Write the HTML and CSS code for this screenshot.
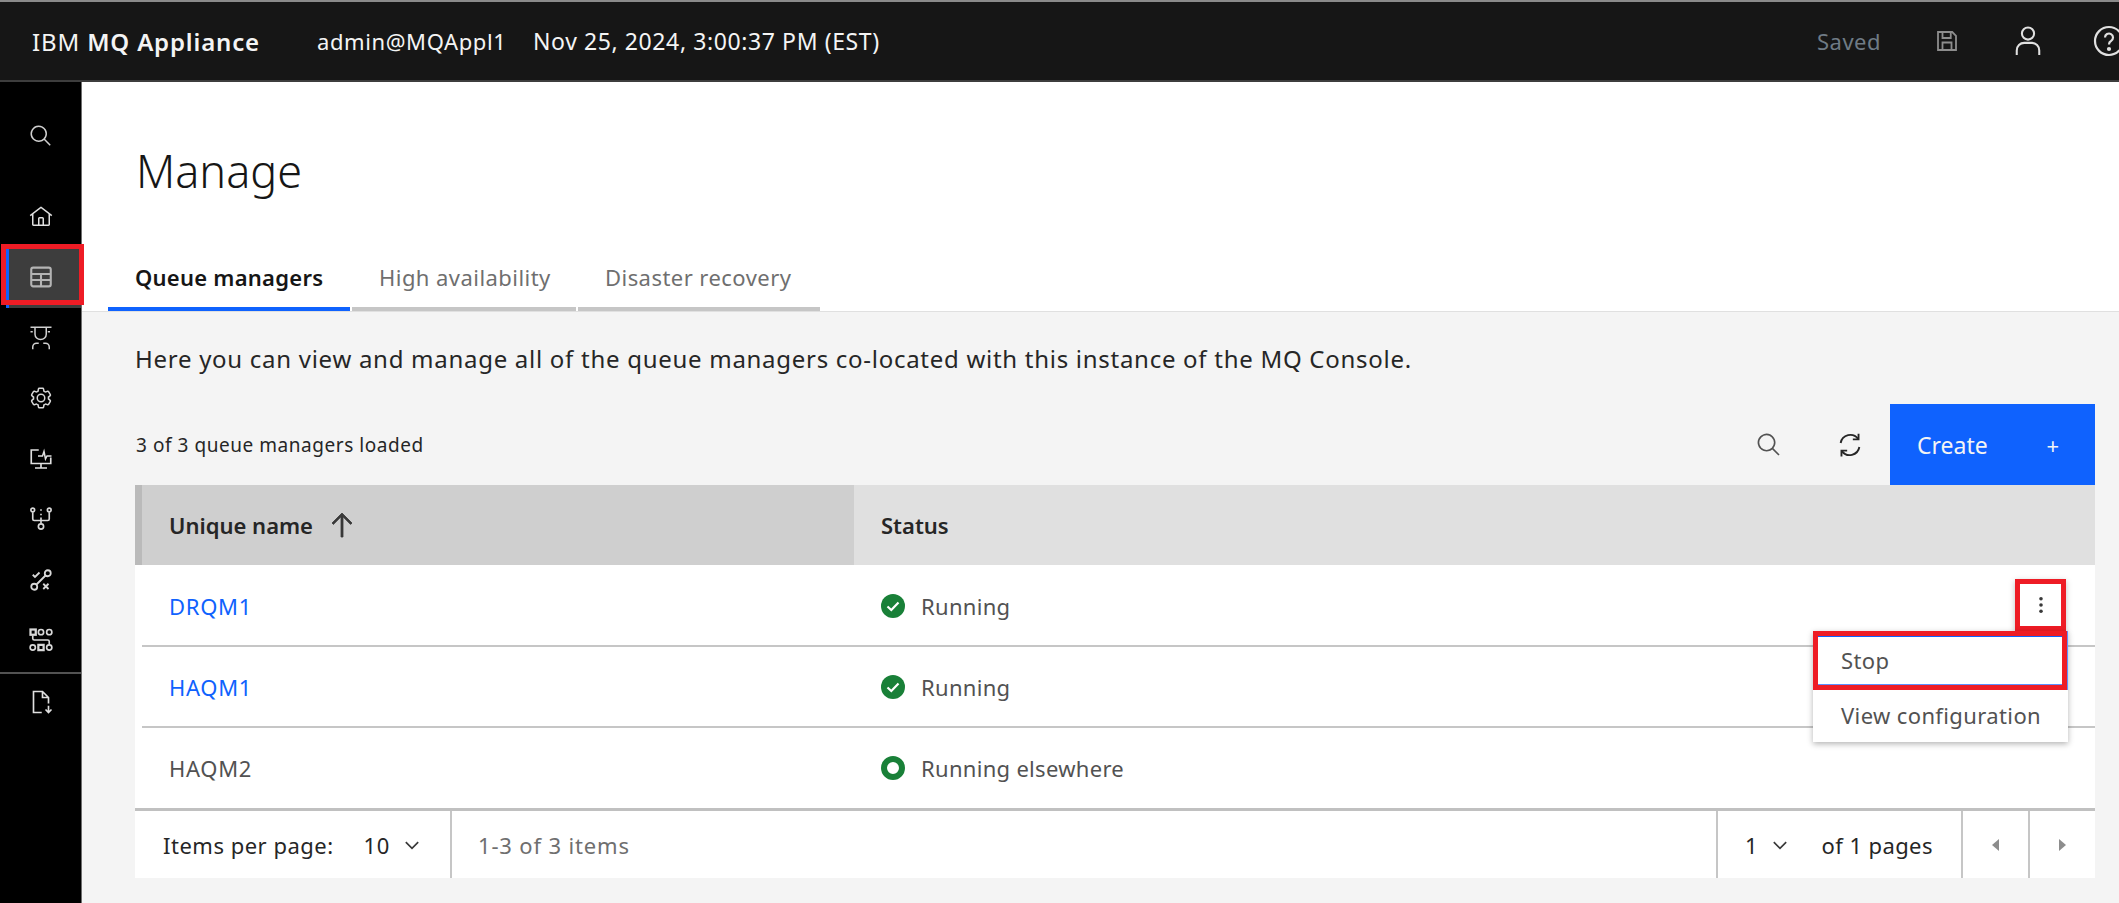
FILE: index.html
```html
<!DOCTYPE html>
<html lang="en">
<head>
<meta charset="utf-8">
<title>Manage - IBM MQ Appliance</title>
<link rel="stylesheet" href="styles.css">
</head>
<body>
<div class="app">
  <header class="topbar">
    <div class="brand">IBM <b>MQ Appliance</b></div>
    <div class="user">admin@MQAppl1</div>
    <div class="clock">Nov 25, 2024, 3:00:37 PM (EST)</div>
    <div class="top-right">
      <span class="saved">Saved</span>
      <svg class="ico-save" viewBox="0 0 32 32" fill="none" stroke="#8d8d8d" stroke-width="2.4"><path d="M4 4h19l5 5v19H4z"/><path d="M10 4v8h11V4M10 28V18h12v10"/></svg>
      <svg class="ico-user" viewBox="0 0 32 32" fill="none" stroke="#e0e0e0" stroke-width="2.2"><circle cx="16" cy="8" r="6.5"/><path d="M4 31v-5a8 8 0 0 1 8-8h8a8 8 0 0 1 8 8v5"/></svg>
      <div class="help-clip"><svg class="ico-help" viewBox="0 0 32 32" fill="none" stroke="#e0e0e0" stroke-width="2.2"><circle cx="16" cy="16" r="14"/><path d="M12 12.5a4 4 0 1 1 6 3.5c-1.500.8-2 1.800-2 3.500"/><circle cx="16" cy="24" r="1" fill="#e0e0e0"/></svg></div>
    </div>
  </header>
  <div class="body-row">
    <nav class="sidebar">
      <div class="nav-item nav-search"><svg viewBox="0 0 32 32" fill="#d0d0d0"><path d="M29 27.5859l-7.5521-7.5521a11.0177 11.0177 0 1 0-1.4141 1.4141L27.5859 29ZM4 13a9 9 0 1 1 9 9 9.01 9.01 0 0 1-9-9Z"/></svg></div>
      <div class="nav-item"><svg viewBox="0 0 32 32" fill="#e0e0e0"><path d="M16.6123,2.2138a1.01,1.01,0,0,0-1.2427,0L1,13.4194l1.2427,1.5717L4,13.6209V26a2.0041,2.0041,0,0,0,2,2H26a2.0037,2.0037,0,0,0,2-2V13.63L29.7573,15,31,13.4282ZM18,26H14V18h4Zm2,0V18a2.0023,2.0023,0,0,0-2-2H14a2.002,2.002,0,0,0-2,2v8H6V12.0615l10-7.79,10,7.8005V26Z"/></svg></div>
      <div class="nav-item selected"><svg viewBox="0 0 32 32" fill="none" stroke="#b4b4b4" stroke-width="2.8"><rect x="3" y="3.500" width="26" height="25" rx="2.500"/><path d="M3 12h26M3 20h26M16 12v16"/></svg></div>
      <div class="nav-item"><svg viewBox="0 0 32 32" fill="none" stroke="#d0d0d0" stroke-width="2"><path d="M2 1.500h28M2 7.500h3M25 7.500h3M8 2v9a7.500 7 0 0 0 15 0V2"/><path d="M5 31v-3a5 5 0 0 1 5-5h3M27 31v-3a5 5 0 0 0-5-5h-3"/></svg></div>
      <div class="nav-item"><svg viewBox="0 0 32 32" fill="#d8d8d8"><path d="M27,16.76c0-.25,0-.5,0-.76s0-.51,0-.77l1.92-1.68A2,2,0,0,0,29.3,11L26.94,7a2,2,0,0,0-1.73-1,2,2,0,0,0-.64.1l-2.43.82a11.35,11.35,0,0,0-1.31-.75l-.51-2.52a2,2,0,0,0-2-1.61H13.64a2,2,0,0,0-2,1.61l-.51,2.52a11.48,11.48,0,0,0-1.32.75L7.43,6.06A2,2,0,0,0,6.79,6,2,2,0,0,0,5.06,7L2.7,11a2,2,0,0,0,.41,2.51L5,15.24c0,.25,0,.5,0,.76s0,.51,0,.77L3.11,18.45A2,2,0,0,0,2.7,21L5.06,25a2,2,0,0,0,1.73,1,2,2,0,0,0,.64-.1l2.43-.82a11.35,11.35,0,0,0,1.31.75l.51,2.52a2,2,0,0,0,2,1.61h4.72a2,2,0,0,0,2-1.61l.51-2.52a11.48,11.48,0,0,0,1.32-.75l2.42.82a2,2,0,0,0,.64.1,2,2,0,0,0,1.73-1L29.3,21a2,2,0,0,0-.41-2.51ZM25.21,24l-3.43-1.16a8.86,8.86,0,0,1-2.71,1.57L18.36,28H13.64l-.71-3.55a9.36,9.36,0,0,1-2.7-1.57L6.79,24,4.43,20l2.72-2.4a8.9,8.9,0,0,1,0-3.13L4.43,12,6.79,8l3.43,1.16a8.86,8.86,0,0,1,2.71-1.57L13.64,4h4.72l.71,3.55a9.36,9.36,0,0,1,2.7,1.57L25.21,8,27.57,12l-2.72,2.4a8.9,8.9,0,0,1,0,3.13L27.57,20Z"/><path d="M16,22a6,6,0,1,1,6-6A5.94,5.94,0,0,1,16,22Zm0-10a3.91,3.91,0,0,0-4,4,3.91,3.91,0,0,0,4,4,3.91,3.91,0,0,0,4-4A3.91,3.91,0,0,0,16,12Z"/></svg></div>
      <div class="nav-item"><svg viewBox="0 0 32 32" fill="none" stroke="#e0e0e0" stroke-width="2.2"><path d="M13 4H3v18h26v-8M16 22v6M8 28h16"/><path d="M12 12h6l2-6 2 10 2-4h6" stroke-width="2"/></svg></div>
      <div class="nav-item"><svg viewBox="0 0 32 32" fill="none" stroke="#d8d8d8" stroke-width="2.2"><circle cx="5" cy="4" r="2.5"/><circle cx="27" cy="4" r="2.5"/><circle cx="16" cy="26" r="3.500"/><path d="M5 7v9a2 2 0 0 0 2 2h18a2 2 0 0 0 2-2V7M16 22V18M16 3v2M16 9v2M16 14v4"/></svg></div>
      <div class="nav-item"><svg viewBox="0 0 32 32" fill="none" stroke="#d8d8d8" stroke-width="2.4"><circle cx="25" cy="7" r="4"/><circle cx="7" cy="25" r="4"/><path d="M22 10L10 22M5 9l3 3 6-6M19 21l7 7M26 21l-7 7"/></svg></div>
      <div class="nav-item"><svg viewBox="0 0 32 32" fill="none" stroke="#d8d8d8" stroke-width="2.2"><rect x="2" y="2" width="7" height="7" stroke-width="3"/><circle cx="16" cy="5.500" r="3.500"/><circle cx="27" cy="5.500" r="3.500"/><circle cx="5" cy="26" r="3.500"/><rect x="12.500" y="22.500" width="7" height="7" stroke-width="3"/><circle cx="27" cy="26" r="3.500"/><path d="M5 10v4a2 2 0 0 0 2 2h18a2 2 0 0 1 2 2v4"/></svg></div>
      <div class="nav-divider"></div>
      <div class="nav-item nav-last"><svg viewBox="0 0 32 32" fill="none" stroke="#e0e0e0" stroke-width="2.2"><path d="M17 30H6V2h12l8 8v8M18 2v8h8M26 21v9M22 26l4 4 4-4"/></svg></div>
    </nav>
    <main class="main">
      <section class="page-head">
        <h1 class="title">Manage</h1>
        <div class="tabs">
          <div class="tab tab-active">Queue managers</div>
          <div class="tab tab-ha">High availability</div>
          <div class="tab tab-dr">Disaster recovery</div>
        </div>
      </section>
      <section class="content">
        <p class="intro">Here you can view and manage all of the queue managers co-located with this instance of the MQ Console.</p>
        <div class="toolbar">
          <span class="loaded">3 of 3 queue managers loaded</span>
          <div class="tools">
            <svg class="tool" viewBox="0 0 32 32" fill="#525252"><path d="M29 27.5859l-7.5521-7.5521a11.0177 11.0177 0 1 0-1.4141 1.4141L27.5859 29ZM4 13a9 9 0 1 1 9 9 9.01 9.01 0 0 1-9-9Z"/></svg>
            <svg class="tool" viewBox="0 0 32 32" fill="none" stroke="#262626" stroke-width="2.300"><path d="M4.500 13.500A12 12 0 0 1 26 8.500M27.500 18.500A12 12 0 0 1 6 23.500"/><path d="M26.500 2v7h-7M5.500 30v-7h7"/></svg>
            <button class="create"><span>Create</span><span class="plus">+</span></button>
          </div>
        </div>
        <div class="table">
          <div class="thead">
            <div class="th th-sorted">Unique name<svg class="sort" viewBox="0 0 32 32" fill="#393939" stroke="#393939" stroke-width=".8"><path d="M16 4L6 14l1.410 1.410L15 7.830V28h2V7.830l7.590 7.580L26 14z"/></svg></div>
            <div class="th th-status">Status</div>
          </div>
          <div class="tr tr-first">
            <a class="cell-name link">DRQM1</a>
            <div class="cell-status"><svg class="st" viewBox="0 0 24 24"><circle cx="12" cy="12" r="12" fill="#198038"/><path d="M6.500 12.500l3.800 3.500 7.200-7.500" fill="none" stroke="#fff" stroke-width="2.200"/></svg>Running</div>
            <div class="kebab"><svg viewBox="0 0 16 16" fill="#393939"><circle cx="8" cy="2.500" r="1.600"/><circle cx="8" cy="8" r="1.600"/><circle cx="8" cy="13.500" r="1.600"/></svg></div>
            <div class="menu">
              <div class="menu-item menu-stop">Stop</div>
              <div class="menu-item">View configuration</div>
            </div>
          </div>
          <div class="tr">
            <a class="cell-name link">HAQM1</a>
            <div class="cell-status"><svg class="st" viewBox="0 0 24 24"><circle cx="12" cy="12" r="12" fill="#198038"/><path d="M6.500 12.500l3.800 3.500 7.200-7.500" fill="none" stroke="#fff" stroke-width="2.200"/></svg>Running</div>
          </div>
          <div class="tr tr-last">
            <span class="cell-name">HAQM2</span>
            <div class="cell-status"><svg class="st" viewBox="0 0 24 24"><circle cx="12" cy="12" r="9" fill="#fff" stroke="#198038" stroke-width="6"/></svg>Running elsewhere</div>
          </div>
          <div class="pager">
            <div class="pg-size">Items per page:<span class="pg-val">10</span><svg class="chev" viewBox="0 0 16 16" fill="none" stroke="#393939" stroke-width="1.500"><path d="M2.500 5.500L8 11l5.500-5.500"/></svg></div>
            <div class="pg-range">1-3 of 3 items</div>
            <div class="pg-page"><span>1</span><svg class="chev" viewBox="0 0 16 16" fill="none" stroke="#393939" stroke-width="1.500"><path d="M2.500 5.500L8 11l5.500-5.500"/></svg><span class="pg-of">of 1 pages</span></div>
            <div class="pg-btn"><svg viewBox="0 0 8 12" fill="#8d8d8d"><path d="M7 0v12L0 6z"/></svg></div>
            <div class="pg-btn"><svg viewBox="0 0 8 12" fill="#8d8d8d"><path d="M0 0v12l7-6z"/></svg></div>
          </div>
        </div>
      </section>
    </main>
  </div>
</div>
</body>
</html>
```
FILE: styles.css
```css
* { box-sizing: border-box; }
html, body { margin: 0; padding: 0; height: 100%; overflow: hidden; }
body { font-family: "Noto Sans", "Open Sans", sans-serif; color: #161616; background: #f4f4f4; }
.app { width: 2119px; height: 903px; display: flex; flex-direction: column; overflow: hidden; }

.topbar { height: 82px; flex: none; background: #161616; border-top: 2px solid #8a8a8a; border-bottom: 2px solid #3d3d3d; display: flex; align-items: center; color: #f4f4f4; padding-left: 32px; }
.brand { width: 285px; font-size: 24px; letter-spacing: .85px; white-space: nowrap; }
.brand b { font-weight: 600; }
.user { width: 216px; white-space: nowrap; font-size: 22px; letter-spacing: .6px; }
.clock { white-space: nowrap; font-size: 23px; letter-spacing: .6px; }
.top-right { margin-left: auto; display: flex; align-items: center; }
.saved { color: #6f7b85; font-size: 22px; letter-spacing: .5px; width: 118px; }
.ico-save { width: 24px; height: 24px; margin-right: 54px; }
.ico-user { width: 30px; height: 30px; margin-right: 50px; }
.help-clip { width: 26px; height: 32px; overflow: hidden; }
.ico-help { width: 32px; height: 32px; display: block; }

.body-row { flex: 1; display: flex; min-height: 0; }
.sidebar { width: 82px; flex: none; background: #000; border-right: 1px solid #6f6f6f; padding-top: 24px; display: flex; flex-direction: column; }
.nav-item { height: 60.500px; flex: none; display: flex; align-items: center; justify-content: center; position: relative; }
.nav-item svg { width: 24px; height: 24px; }
.nav-search { margin-bottom: 20px; }
.selected { background: #3d3d3d; border-left: 3px solid #0f62fe; margin: 0 0 0 6px; padding-right: 9px; }
.selected::after { content: ""; position: absolute; left: -8px; right: -3px; top: -3px; bottom: 3px; border: 5px solid #ee1c25; }
.nav-divider { height: 2px; flex: none; background: #525252; margin-top: 1px; }
.nav-last { height: 56px; }

.main { flex: 1; min-width: 0; display: flex; flex-direction: column; }
.page-head { height: 230px; flex: none; background: #fff; border-bottom: 1px solid #e0e0e0; padding-left: 26px; display: flex; flex-direction: column; }
.title { margin: 59px 0 0 28px; font-size: 45px; font-weight: 300; line-height: 60px; height: 105px; color: #161616; }
.tabs { display: flex; gap: 2px; }
.tab { height: 65px; display: flex; align-items: center; padding: 0 0 0 27px; font-size: 22px; letter-spacing: .45px; color: #6f6f6f; border-bottom: 4px solid #c6c6c6; white-space: nowrap; }
.tab-active { width: 242px; color: #161616; font-weight: 600; letter-spacing: .25px; border-bottom-color: #0f62fe; }
.tab-ha { width: 224px; }
.tab-dr { width: 242px; }

.content { flex: 1; padding: 0 24px 0 53px; min-height: 0; }
.intro { margin: 0; height: 92px; display: flex; align-items: center; font-size: 24px; letter-spacing: .72px; color: #262626; white-space: nowrap; }
.toolbar { height: 81px; display: flex; align-items: center; justify-content: space-between; }
.loaded { font-size: 19px; letter-spacing: .55px; color: #262626; padding-left: 1px; }
.tools { display: flex; align-items: center; height: 100%; }
.tool { width: 26px; height: 26px; margin-right: 55px; }
.tools .tool:nth-child(2) { margin-right: 27px; }
.create { height: 100%; width: 205px; background: #0f62fe; border: 0; color: #f4f4f4; font: inherit; font-size: 23px; display: flex; align-items: center; justify-content: space-between; padding: 0 36px 0 27px; }
.plus { font-size: 22px; }

.table { background: #fff; }
.thead { height: 80px; display: grid; grid-template-columns: 719px 1fr; background: #e0e0e0; font-weight: 600; font-size: 22px; color: #262626; }
.th { display: flex; align-items: center; }
.th-sorted { background: #cfcfcf; border-left: 7px solid #bababa; padding-left: 27px; }
.th-status { padding-left: 27px; }
.sort { width: 32px; height: 32px; margin-left: 13px; }
.tr { height: 81px; margin-left: 7px; display: grid; grid-template-columns: 712px 1fr; align-items: center; border-bottom: 2px solid #c6c6c6; font-size: 22px; letter-spacing: .3px; color: #525252; position: relative; background: #fff; }
.tr-first { height: 82px; padding-top: 2px; }
.tr-last { height: 83px; border-bottom: 3px solid #c0c0c0; margin-left: 0; padding-left: 7px; }
.cell-name { padding-left: 27px; letter-spacing: .7px; }
.link { color: #0f62fe; }
.cell-status { padding-left: 27px; display: flex; align-items: center; gap: 16px; }
.st { width: 24px; height: 24px; flex: none; }
.kebab { position: absolute; right: 29px; top: 14px; width: 51px; height: 52px; border: 5px solid #ee1c25; box-shadow: 0 2px 6px rgba(0,0,0,.25); background: #fff; display: flex; align-items: center; justify-content: center; z-index: 2; }
.kebab svg { width: 18px; height: 18px; }
.menu { position: absolute; right: 27px; top: 66px; width: 255px; background: #fff; box-shadow: 0 2px 6px rgba(0,0,0,.3); z-index: 3; }
.menu-item { height: 52px; display: flex; align-items: center; padding: 0 0 2px 28px; font-size: 22px; letter-spacing: .38px; color: #525252; }
.menu-stop { height: 59px; margin-right: 1px; border: 5px solid #ee1c25; padding: 0 0 1px 23px; box-shadow: inset 0 1px 0 #0f62fe, inset 0 -1px 0 #5b8fff, 1px 0 0 #5b8fff; }

.pager { height: 67px; display: flex; align-items: stretch; font-size: 22px; color: #393939; }
.pager > div { display: flex; align-items: center; }
.pg-size { width: 317px; padding-left: 28px; border-right: 2px solid #c6c6c6; color: #262626; letter-spacing: .5px; white-space: nowrap; }
.pg-val { margin-left: 30px; }
.chev { width: 18px; height: 18px; margin-left: 13px; }
.pg-range { flex: 1; padding-left: 26px; color: #6f6f6f; letter-spacing: .85px; }
.pg-page { width: 245px; border-left: 2px solid #c6c6c6; padding-left: 27px; color: #262626; }
.pg-page .chev { margin-right: 33px; }
.pg-of { letter-spacing: .4px; }
.pg-btn { width: 67px; border-left: 2px solid #c6c6c6; justify-content: center; }
.pg-btn svg { width: 8px; height: 12px; }
```
